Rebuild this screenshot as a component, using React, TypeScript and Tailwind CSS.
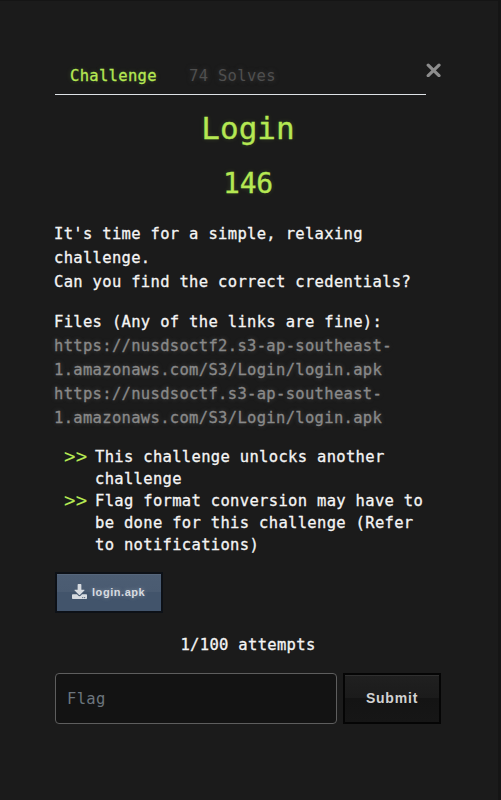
import React from "react";

const glow = "[text-shadow:0_0_5px_rgba(181,232,83,0.2)]";

function Tabs() {
  return (
    <header className="flex h-8 items-start">
      <nav className="flex h-8 w-[371px] border-b border-[#dee2e6] pl-[15px] pt-px leading-6">
        <a className="w-[119px] whitespace-nowrap text-[#b5e853] [text-shadow:0_0_5px_rgba(181,232,83,0.25)]">Challenge</a>
        <a className="whitespace-nowrap text-[#4f4f4f] [-webkit-text-stroke:0px] [text-shadow:0_0_5px_#3c3c3c]">74 Solves</a>
      </nav>
      <button aria-label="Close">
        <svg width="16" height="14" viewBox="0 0 16 14" className="block" fill="none" stroke="#8d8d8d" strokeWidth="3.2" strokeLinecap="round">
          <path d="M2.200 2.200 13 12.700M13 2.200 2.200 12.700" />
        </svg>
      </button>
    </header>
  );
}

function Hint({ children }: { children: React.ReactNode }) {
  return (
    <li className="flex leading-[22px]">
      <span className="-mt-px w-[31px] shrink-0 text-[19px] text-[#b5e853] [-webkit-text-stroke:0px]">&gt;&gt;</span>
      <span>{children}</span>
    </li>
  );
}

export default function App() {
  return (
    <div className="h-[800px] w-[501px] border-t border-r-[3px] border-[#151515] bg-[#1b1b1b] pl-[55px] pt-[62px] font-['DejaVu_Sans_Mono','Liberation_Mono',monospace] text-[15.5px] tracking-[0.32px] text-[#f4f4f4] [-webkit-text-stroke:0.3px_currentColor]">
      <Tabs />
      <main className="w-[386px]">
        <h3 className={`mt-[14px] text-center text-[31px] leading-[38px] tracking-[0px] text-[#b5e853] ${glow}`}>Login</h3>
        <h4 className={`mt-[20px] text-center text-[28px] leading-[34px] tracking-[-0.2px] text-[#b5e853] ${glow}`}>146</h4>
        <p className="-ml-px mt-[21px] leading-6">
          It's time for a simple, relaxing<br />challenge.<br />Can you find the correct credentials?
        </p>
        <p className="-ml-px mt-4 whitespace-nowrap leading-6">
          Files (Any of the links are fine):<br />
          <span className="text-[#898989] [text-shadow:0_0_5px_rgba(150,150,150,0.4)]">
            https://nusdsoctf2.s3-ap-southeast-<br />1.amazonaws.com/S3/Login/login.apk<br />
            https://nusdsoctf.s3-ap-southeast-<br />1.amazonaws.com/S3/Login/login.apk
          </span>
        </p>
        <ul className="ml-[9px] mt-4 whitespace-nowrap">
          <Hint>This challenge unlocks another<br />challenge</Hint>
          <Hint>Flag format conversion may have to<br />be done for this challenge (Refer<br />to notifications)</Hint>
        </ul>
        <button className="mt-4 flex h-[41px] w-[108px] items-center border-2 border-[#0d1117] bg-[linear-gradient(#4c5d73_0%,#4a5b71_49%,#42546b_50%,#42546b_100%)] pl-[15px] font-['Liberation_Sans',Arial,sans-serif] text-[11px] font-bold tracking-[0.55px] text-[#d7dbe0] shadow-[inset_0_1px_0_rgba(255,255,255,0.06)] [-webkit-text-stroke:0px] [text-shadow:0_0_4px_rgba(200,210,220,0.4)]">
          <svg width="15" height="15" viewBox="0 0 512 512" fill="currentColor" className="mr-[5px] -mt-[2px]">
            <path d="M216 0h80c13.300 0 24 10.700 24 24v168h87.700c17.800 0 26.700 21.500 14.100 34.100L269.700 378.300c-7.500 7.500-19.800 7.500-27.300 0L90.100 226.100c-12.600-12.600-3.700-34.100 14.100-34.100H192V24c0-13.300 10.700-24 24-24zm296 376v112c0 13.300-10.700 24-24 24H24c-13.300 0-24-10.700-24-24V376c0-13.300 10.700-24 24-24h146.700l49 49c20.100 20.100 52.500 20.100 72.600 0l49-49H488c13.300 0 24 10.700 24 24zM388 464a20 20 0 1 0-40 0 20 20 0 0 0 40 0zm64 0a20 20 0 1 0-40 0 20 20 0 0 0 40 0z" />
          </svg>
          login.apk
        </button>
        <p className="mt-5 text-center leading-6">1/100 attempts</p>
        <form className="mt-4 flex gap-[6px]" onSubmit={(e) => e.preventDefault()}>
          <input placeholder="Flag" className="h-[51px] w-[282px] rounded border border-[#5e5e5e] bg-[#131313] px-[11px] tracking-[0.32px] outline-none [-webkit-text-stroke:0px] placeholder:text-[#6c757d]" />
          <button className="h-[51px] w-[98px] border-2 border-[#050505] bg-[linear-gradient(#202020_0%,#1b1b1b_49%,#141414_50%,#161616_100%)] font-['Liberation_Sans',Arial,sans-serif] text-[14px] font-bold tracking-[0.8px] text-[#d2d2d2] shadow-[inset_0_1px_0_#303030] [-webkit-text-stroke:0px]">Submit</button>
        </form>
      </main>
    </div>
  );
}
